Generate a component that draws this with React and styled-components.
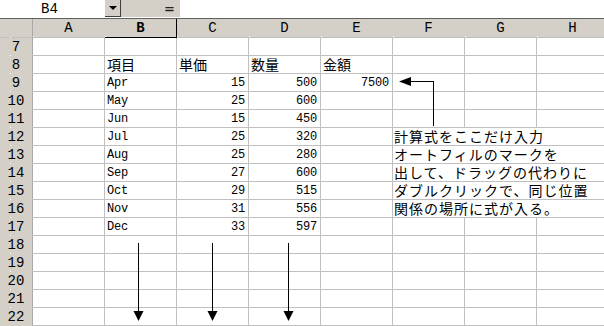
import React from "react";
import styled, { createGlobalStyle, css } from "styled-components";

const GlobalStyle = createGlobalStyle`
  html, body {
    margin: 0;
    padding: 0;
    background: #fff;
    overflow: hidden;
  }
  * {
    box-sizing: border-box;
  }
`;

const GRAY = "#d4d0c8";
const GRID = "#c0c0c0";
const MONO = `"Liberation Mono", "DejaVu Sans Mono", monospace`;
const JP = `"Noto Sans CJK JP", "Noto Sans", sans-serif`;

const Sheet = styled.div`
  position: relative;
  width: 604px;
  height: 326px;
  overflow: hidden;
  background: #fff;
  font-family: ${MONO};
  color: #000;
`;

const FormulaBar = styled.div`
  display: flex;
  height: 19px;
  border-bottom: 1px solid #606060;
`;

const NameBox = styled.div`
  width: 105px;
  display: flex;
  align-items: center;
  justify-content: center;
  font-size: 14px;
  padding-right: 6px;
`;

const DropButton = styled.div`
  width: 16px;
  height: 17px;
  background: ${GRAY};
  border-right: 1px solid #404040;
  border-bottom: 1px solid #404040;
  display: flex;
  align-items: center;
  justify-content: center;
`;

const Caret = styled.div`
  width: 0;
  height: 0;
  border-left: 4px solid transparent;
  border-right: 4px solid transparent;
  border-top: 4px solid #000;
`;

const EqualsBox = styled.div`
  width: 59px;
  height: 17px;
  background: ${GRAY};
  display: flex;
  align-items: center;
  justify-content: flex-end;
  padding-right: 5px;
  font-family: "DejaVu Sans", sans-serif;
  font-weight: bold;
  font-size: 13px;
  color: #222;
`;

const Grid = styled.div`
  display: grid;
  grid-template-columns: 33px repeat(8, 72px);
  grid-template-rows: 19px;
  grid-auto-rows: 18px;
`;

const headBase = css`
  background: ${GRAY};
  display: flex;
  align-items: center;
  justify-content: center;
  font-size: 14px;
  line-height: 16px;
  position: relative;
`;

const Corner = styled.div`
  ${headBase};
  border-right: 1px solid #a8a8a8;
  border-bottom: 1px solid ${GRID};
`;

const ColHead = styled.div`
  ${headBase};
  border-bottom: 1px solid ${(p) => (p.$active ? "#000" : GRID)};
  border-right: 1px solid ${(p) => (p.$active ? "#000" : GRAY)};
  font-weight: ${(p) => (p.$active ? "bold" : "normal")};
  &::before {
    content: "";
    position: absolute;
    left: 0;
    bottom: 0;
    width: 1px;
    height: 1px;
    background: #fff;
  }
`;

const RowHead = styled.div`
  ${headBase};
  border-right: 1px solid #a8a8a8;
  border-bottom: 1px solid ${GRAY};
  &::before {
    content: "";
    position: absolute;
    left: 10px;
    top: -1px;
    width: 1px;
    height: 1px;
    background: #fff;
  }
`;

const Cell = styled.div`
  display: flex;
  align-items: flex-end;
  justify-content: ${(p) => (p.$right ? "flex-end" : "flex-start")};
  grid-column: ${(p) => (p.$span ? `span ${p.$span}` : "auto")};
  border-right: 1px solid ${GRID};
  border-bottom: 1px solid ${GRID};
  padding: 0 ${(p) => (p.$right ? "3px" : "0")} 1px 2px;
  font-size: 12px;
  letter-spacing: -0.2px;
  line-height: 14px;
  white-space: nowrap;
  overflow: visible;
`;

const JpText = styled.span`
  display: inline-block;
  height: 16px;
  font-family: ${JP};
  font-size: 14px;
  line-height: 16px;
  letter-spacing: ${(p) => (p.$wide ? "1px" : "0")};
  margin-left: ${(p) => (p.$wide ? "-1px" : "0")};
`;

const Overlay = styled.svg`
  position: absolute;
  left: 0;
  top: 0;
  pointer-events: none;
`;

const cols = ["A", "B", "C", "D", "E", "F", "G", "H"];

const data = [
  ["Apr", 15, 500],
  ["May", 25, 600],
  ["Jun", 15, 450],
  ["Jul", 25, 320],
  ["Aug", 25, 280],
  ["Sep", 27, 600],
  ["Oct", 29, 515],
  ["Nov", 31, 556],
  ["Dec", 33, 597],
];

const notes = {
  12: "計算式をここだけ入力",
  13: "オートフィルのマークを",
  14: "出して、ドラッグの代わりに",
  15: "ダブルクリックで、同じ位置",
  16: "関係の場所に式が入る。",
};

const rowCells = (r) => {
  const cells = [<Cell key="A" />];
  if (r === 8) {
    ["項目", "単価", "数量", "金額"].forEach((t) =>
      cells.push(
        <Cell key={t}>
          <JpText>{t}</JpText>
        </Cell>
      )
    );
  } else if (r >= 9 && r <= 17) {
    const [m, p, q] = data[r - 9];
    cells.push(<Cell key="B">{m}</Cell>);
    cells.push(
      <Cell key="C" $right>
        {p}
      </Cell>
    );
    cells.push(
      <Cell key="D" $right>
        {q}
      </Cell>
    );
    cells.push(
      <Cell key="E" $right>
        {r === 9 ? 7500 : ""}
      </Cell>
    );
  } else {
    ["B", "C", "D", "E"].forEach((k) => cells.push(<Cell key={k} />));
  }
  if (notes[r]) {
    cells.push(
      <Cell key="F" $span={3}>
        <JpText $wide>{notes[r]}</JpText>
      </Cell>
    );
  } else {
    ["F", "G", "H"].forEach((k) => cells.push(<Cell key={k} />));
  }
  return cells;
};

const DownArrow = ({ x }) => (
  <g>
    <line x1={x + 0.5} y1={243} x2={x + 0.5} y2={312} stroke="#000" strokeWidth="1" />
    <path d={`M${x - 4.5} 311 L${x + 5.5} 311 L${x + 0.5} 321 Z`} fill="#000" />
  </g>
);

export default function App() {
  const rows = [];
  for (let r = 7; r <= 22; r++) rows.push(r);

  return (
    <Sheet>
      <GlobalStyle />
      <FormulaBar>
        <NameBox>B4</NameBox>
        <DropButton>
          <Caret />
        </DropButton>
        <EqualsBox>=</EqualsBox>
      </FormulaBar>
      <Grid>
        <Corner />
        {cols.map((c) => (
          <ColHead key={c} $active={c === "B"}>
            {c}
          </ColHead>
        ))}
        {rows.map((r) => (
          <React.Fragment key={r}>
            <RowHead>{r}</RowHead>
            {rowCells(r)}
          </React.Fragment>
        ))}
      </Grid>
      <Overlay width="604" height="326" viewBox="0 0 604 326">
        <line x1="409" y1="81.5" x2="433.5" y2="81.5" stroke="#000" />
        <line x1="433.5" y1="81" x2="433.5" y2="126" stroke="#000" />
        <path d="M399 81.5 L411 77 L411 86 Z" fill="#000" />
        <DownArrow x={138} />
        <DownArrow x={212} />
        <DownArrow x={288} />
      </Overlay>
    </Sheet>
  );
}
